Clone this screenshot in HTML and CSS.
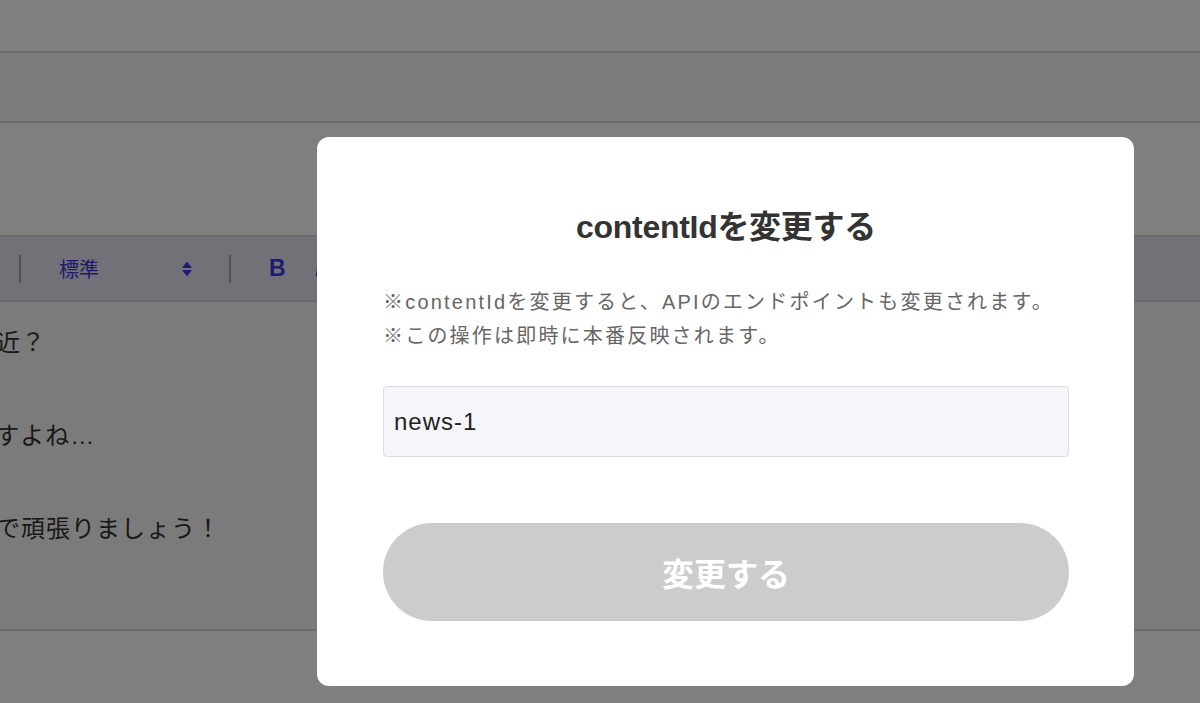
FILE: index.html
```html
<!DOCTYPE html>
<html lang="ja">
  <head>
    <meta charset="UTF-8" />
    <meta name="viewport" content="width=device-width, initial-scale=1.0" />
    <title>contentIdを変更する</title>
    <link rel="stylesheet" href="styles.css">
  </head>
  <body>
    <div class="page">
      <div class="header"></div>
      <div class="subbar"></div>
      <div class="fields"></div>
      <div class="toolbar">
        <span class="sep"></span>
        <div class="select">
          <span>標準</span>
          <svg class="updown" width="10" height="16" viewBox="0 0 10 16">
            <path d="M5 1.5 L9 6.5 H1 Z" />
            <path d="M5 14.5 L9 9.5 H1 Z" />
          </svg>
        </div>
        <span class="sep"></span>
        <span class="tool bold">B</span>
        <span class="tool italic">I</span>
      </div>
      <div class="editor">
        <p>お元気ですか？最近？</p>
        <p>ほんとうに寒いですよね…</p>
        <p>今日も一日みんなで頑張りましょう！</p>
      </div>
      <div class="footer"></div>
    </div>

    <div class="overlay">
      <div class="modal">
        <h2 class="modal-title">contentIdを変更する</h2>
        <p class="modal-note">
          ※contentIdを変更すると、APIのエンドポイントも変更されます。<br />
          ※この操作は即時に本番反映されます。
        </p>
        <input class="modal-input" type="text" value="news-1" />
        <button class="modal-button" disabled>変更する</button>
      </div>
    </div>
  </body>
</html>
```

FILE: styles.css
```css
html,
body {
  margin: 0;
  padding: 0;
  height: 100%;
  overflow: hidden;
}
body {
  background-color: white;
  font-family: "Liberation Sans", "Noto Sans CJK JP", sans-serif;
  color: #333;
}
.page {
  display: flex;
  flex-direction: column;
  height: 100vh;
}
.header {
  height: 51px;
  border-bottom: 2px solid #d9d9d9;
}
.subbar {
  height: 68px;
  background-color: #f8f8f8;
  border-bottom: 2px solid #d9d9d9;
}
.fields {
  height: 112px;
}
.toolbar {
  display: flex;
  align-items: center;
  height: 63px;
  padding-left: 19px;
  background-color: #e5e3f0;
  border-top: 2px solid #d6d5de;
  border-bottom: 2px solid #d6d5de;
  color: #3f34e0;
}
.sep {
  width: 2px;
  height: 28px;
  background-color: #a2a2a6;
}
.select {
  display: flex;
  align-items: center;
  justify-content: space-between;
  width: 133px;
  padding: 0 37px 0 38px;
  font-size: 20px;
}
.updown path {
  fill: #3f34e0;
  stroke: #3f34e0;
  stroke-width: 1.2;
  stroke-linejoin: round;
}
.tool {
  font-size: 23px;
}
.bold {
  font-weight: bold;
  margin-left: 38px;
}
.italic {
  font-style: italic;
  margin-left: 29px;
}
.editor {
  height: 304px;
  padding-top: 23px;
  margin-left: -204px;
  background-color: #f6f6f6;
  border-bottom: 2px solid #d9d9d9;
}
.editor p {
  margin: 0 0 57px;
  font-size: 24px;
  line-height: 36px;
  letter-spacing: 1px;
  white-space: nowrap;
}
.footer {
  flex: 1;
}

/* modal */
.overlay {
  position: fixed;
  top: 0;
  left: 0;
  right: 0;
  bottom: 0;
  padding: 137px 0 0 317px;
  background-color: rgba(0, 0, 0, 0.5);
}
.modal {
  display: flex;
  flex-direction: column;
  width: 686px;
  padding: 66px 65px 65px 66px;
  background-color: white;
  border-radius: 12px;
}
.modal-title {
  margin: 0;
  font-size: 32px;
  line-height: 48px;
  font-weight: bold;
  letter-spacing: -0.3px;
  text-align: center;
  color: #333;
}
.modal-note {
  margin: 34px 0 0;
  font-size: 20px;
  line-height: 34px;
  letter-spacing: 2.2px;
  color: #666;
}
.modal-input {
  box-sizing: border-box;
  margin-top: 33px;
  height: 71px;
  padding: 0 10px;
  background-color: #f6f6fa;
  border: 1px solid #dcdce0;
  border-radius: 4px;
  font-family: "Liberation Sans", "Noto Sans CJK JP", sans-serif;
  font-size: 24px;
  letter-spacing: 1px;
  color: #222;
}
.modal-button {
  margin-top: 66px;
  height: 98px;
  border: none;
  border-radius: 49px;
  background-color: #cccccc;
  color: white;
  font-family: "Liberation Sans", "Noto Sans CJK JP", sans-serif;
  font-size: 32px;
  font-weight: bold;
}
```
